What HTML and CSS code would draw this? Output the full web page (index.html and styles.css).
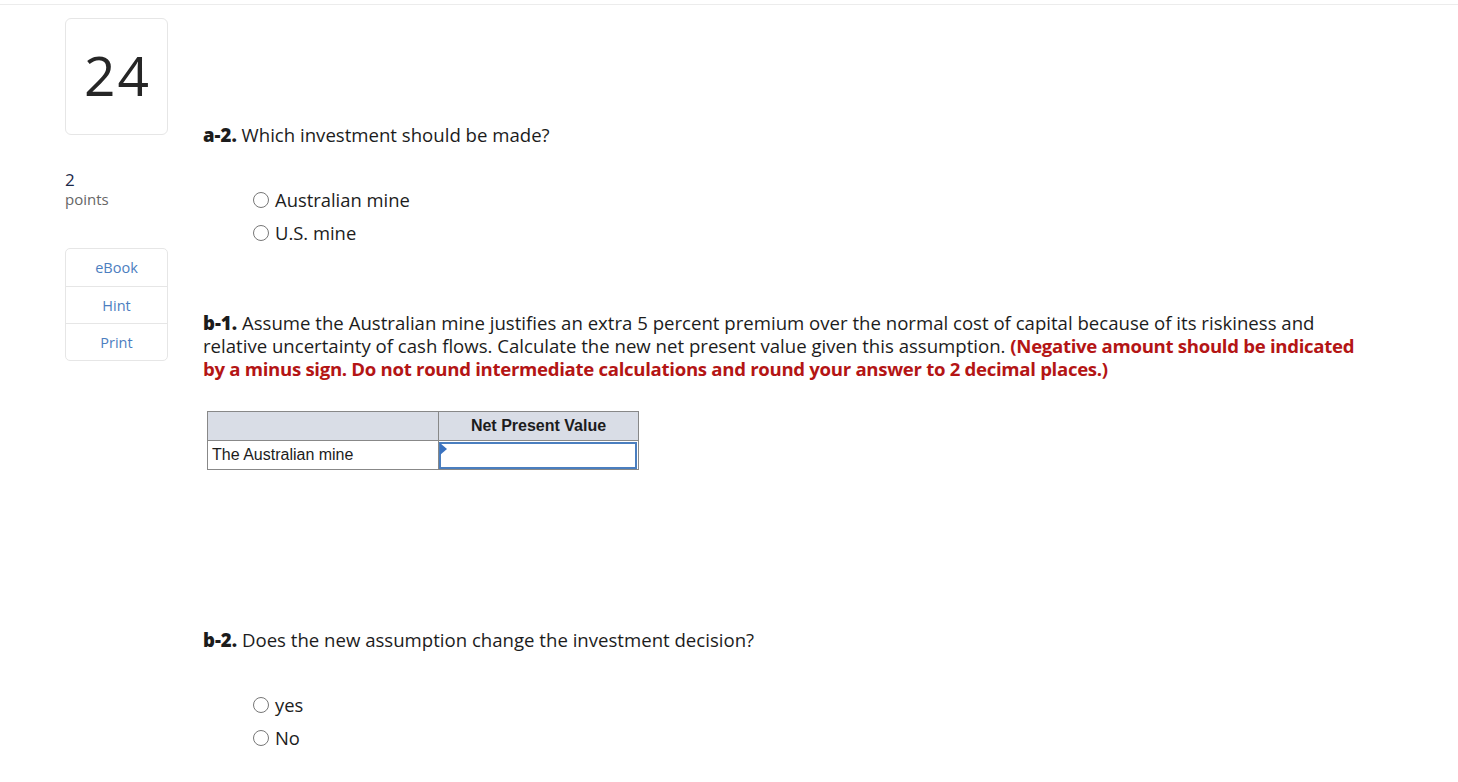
FILE: index.html
```html
<!DOCTYPE html>
<html>
<head>
<meta charset="utf-8">
<link rel="stylesheet" href="styles.css">
</head>
<body>
<div class="topbar"></div>
<div class="page">
  <aside class="sidebar">
    <div class="qnum">24</div>
    <div class="points"><div class="pts-num">2</div><div class="pts-label">points</div></div>
    <div class="tools">
      <div class="tool">eBook</div>
      <div class="tool">Hint</div>
      <div class="tool">Print</div>
    </div>
  </aside>
  <main class="content">
    <p class="q q-a2"><b class="lbl">a-2.</b> Which investment should be made?</p>
    <div class="options opts-a2">
      <label class="opt"><span class="radio"></span>Australian mine</label>
      <label class="opt"><span class="radio"></span>U.S. mine</label>
    </div>
    <p class="q q-b1"><b class="lbl">b-1.</b> Assume the Australian mine justifies an extra 5 percent premium over the normal cost of capital because of its riskiness and relative uncertainty of cash flows. Calculate the new net present value given this assumption. <b class="red">(Negative amount should be indicated by a minus sign. Do not round intermediate calculations and round your answer to 2 decimal places.)</b></p>
    <table class="grid">
      <tr><th class="c1"></th><th class="c2">Net Present Value</th></tr>
      <tr><td class="c1">The Australian mine</td><td class="c2 inputcell"><div class="inputbox"><span class="tri"></span></div></td></tr>
    </table>
    <p class="q q-b2"><b class="lbl">b-2.</b> Does the new assumption change the investment decision?</p>
    <div class="options opts-b2">
      <label class="opt"><span class="radio"></span>yes</label>
      <label class="opt"><span class="radio"></span>No</label>
    </div>
  </main>
</div>
</body>
</html>
```
FILE: styles.css
```css
* { box-sizing: border-box; }
body { margin: 0; background: #fff; font-family: "Open Sans", "Noto Sans", sans-serif; color: #1c1c1c; }
.topbar { height: 5px; border-bottom: 1px solid #ececec; }
.page { display: flex; align-items: flex-start; }
.sidebar { margin-left: 65px; width: 103px; flex: none; padding-top: 13px; }
.qnum { height: 117px; border: 1px solid #e6e6e6; border-radius: 6px; display: flex; align-items: center; justify-content: center; font-size: 55px; letter-spacing: 2px; padding-left: 2px; color: #262626; padding-bottom: 4px; }
.points { margin-top: 35px; }
.pts-num { font-size: 17px; line-height: 20px; color: #1c2a4a; }
.pts-label { font-size: 15px; line-height: 18px; color: #666; }
.tools { margin-top: 40px; border: 1px solid #e6e6e6; border-radius: 5px; }
.tool { height: 37px; display: flex; align-items: center; justify-content: center; font-size: 14.5px; color: #4c7ec0; border-top: 1px solid #e6e6e6; }
.tool:first-child { border-top: none; }
.content { margin-left: 35px; flex: 1; padding-right: 80px; }
.q { margin: 0; font-size: 18.6px; line-height: 23px; }
.lbl { font-weight: 800; }
.red { color: #b41515; font-weight: 700; letter-spacing: -0.3px; }
.q-a2 { margin-top: 118px; }
.options { padding-left: 50px; display: flex; flex-direction: column; }
.opts-a2 { margin-top: 37px; }
.opt { display: flex; align-items: center; font-size: 18.4px; height: 33px; }
.radio { width: 16px; height: 16px; border: 1px solid #777; border-radius: 50%; margin-right: 6px; flex: none; }
.q-b1 { margin-top: 62px; }
.grid { margin-top: 31px; margin-left: 4px; border-collapse: collapse; font-family: "Liberation Sans", Arial, sans-serif; font-size: 16px; }
.grid th, .grid td { border: 1px solid #888; padding: 0; height: 29px; }
.grid th { background: #d9dde6; font-weight: 700; color: #1c1c1c; }
.grid .c1 { width: 231px; }
.grid .c2 { width: 200px; }
.grid td.c1 { padding-left: 4px; text-align: left; }
.inputcell { position: relative; }
.inputbox { height: 27px; border: 2px solid #4a7ebf; margin: 0 1px 0 0; position: relative; }
.tri { position: absolute; left: -1px; top: -1px; width: 0; height: 0; border-top: 6px solid transparent; border-bottom: 6px solid transparent; border-left: 7px solid #3a72c0; }
.q-b2 { margin-top: 158px; }
.opts-b2 { margin-top: 37px; }
```
